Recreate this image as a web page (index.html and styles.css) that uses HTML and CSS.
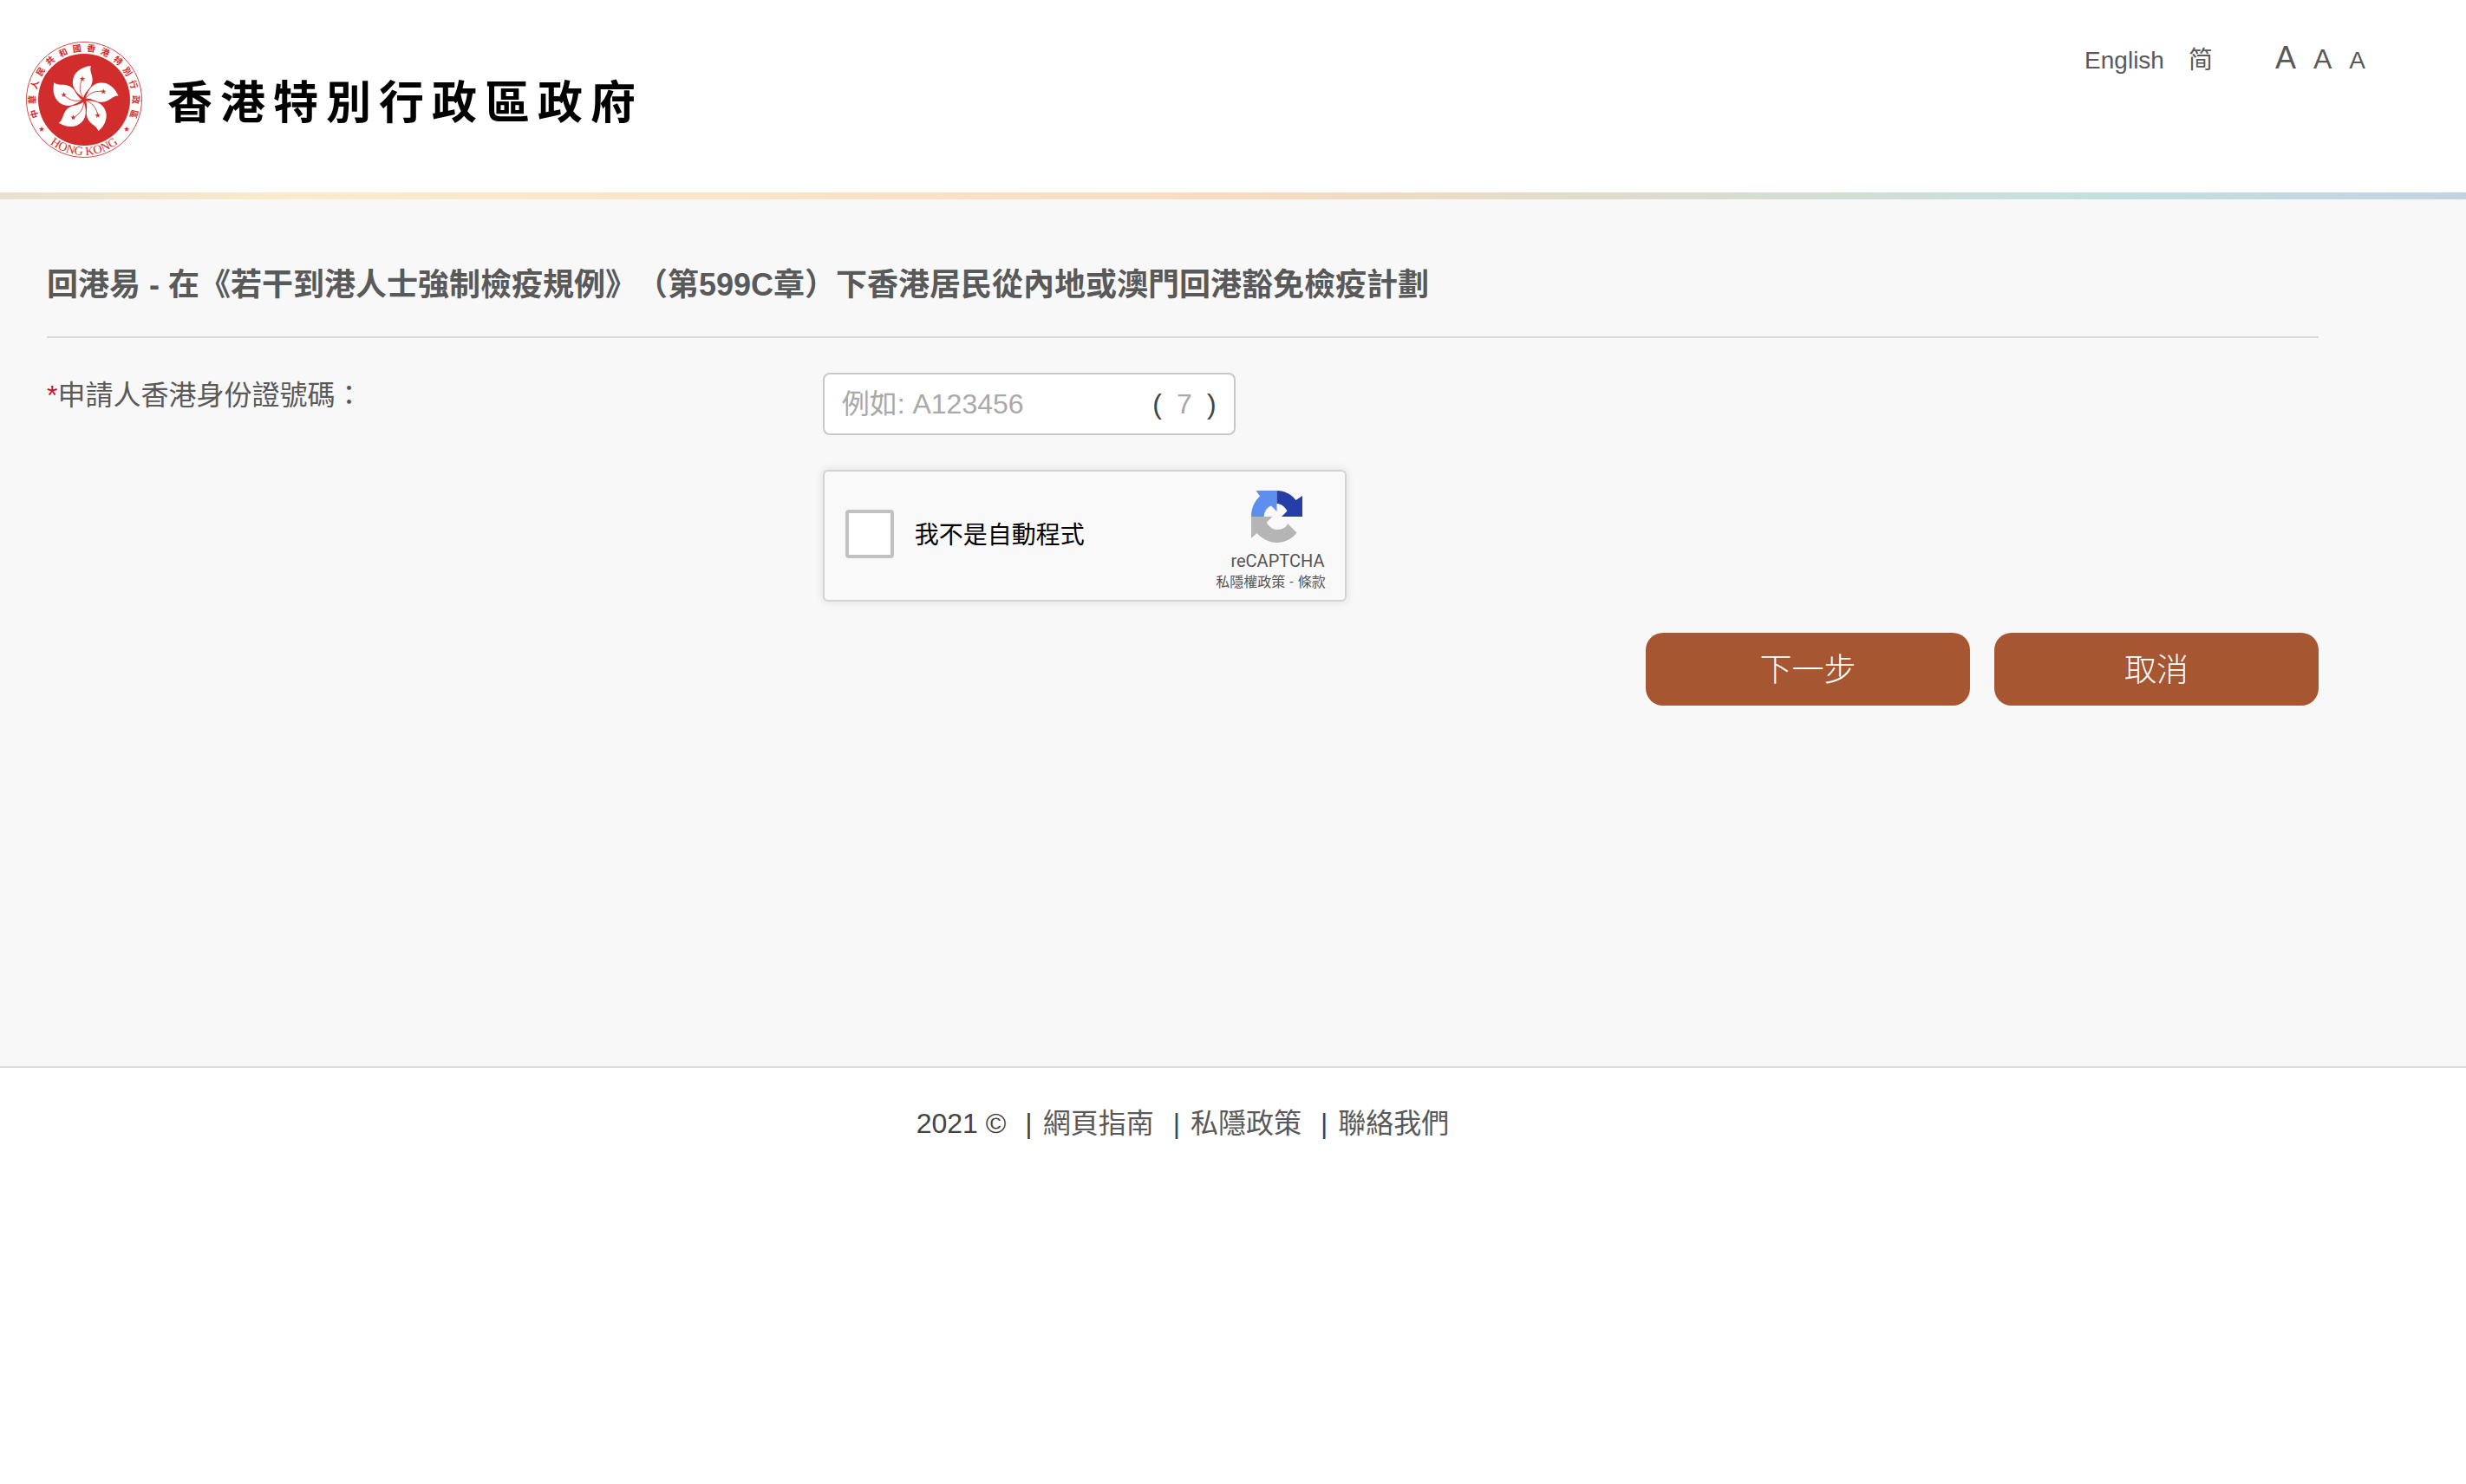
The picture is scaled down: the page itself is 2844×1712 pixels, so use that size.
FILE: index.html
```html
<!DOCTYPE html>
<html lang="zh-HK">
<head>
<meta charset="utf-8">
<meta name="viewport" content="width=device-width, initial-scale=1">
<title>回港易</title>
<link rel="stylesheet" href="styles.css">
</head>
<body>
<header class="site-header">
  <a class="brand" href="#">
    <svg class="emblem" viewBox="-68 -68 136 136" aria-hidden="true">
      <defs>
        <path id="star" d="M0,-3.4 L0.8,-1.1 L3.2,-1.1 L1.3,0.4 L2,2.8 L0,1.4 L-2,2.8 L-1.3,0.4 L-3.2,-1.1 L-0.8,-1.1Z"/>
        <g id="petal">
          <path fill="#fff" d="M-1,-2 C-9,-8 -14,-14 -13,-22 C-12,-32 -3,-38 8,-39 C5,-32 13,-26 8,-16 C6,-12 1,-9 -1,-2Z"/>
          <path fill="none" stroke="#d22d2d" stroke-width="0.8" d="M-1,-2 C-5,-8 -6,-14 -3,-22"/>
          <use href="#star" x="-2" y="-24" fill="#d22d2d"/>
        </g>
        <path id="lower-arc" d="M-64,0 A64,64 0 0 0 64,0"/>
      </defs>
      <circle r="66.5" fill="#fff" stroke="#d9474a" stroke-width="1"/>
      <circle r="53" fill="#d22d2d"/>
      <use href="#petal"/>
      <use href="#petal" transform="rotate(72)"/>
      <use href="#petal" transform="rotate(144)"/>
      <use href="#petal" transform="rotate(216)"/>
      <use href="#petal" transform="rotate(288)"/>
      <g class="ring-text">
        <text y="-56" transform="rotate(-106)">中</text>
        <text y="-56" transform="rotate(-90)">華</text>
        <text y="-56" transform="rotate(-73)">人</text>
        <text y="-56" transform="rotate(-57)">民</text>
        <text y="-56" transform="rotate(-41)">共</text>
        <text y="-56" transform="rotate(-24)">和</text>
        <text y="-56" transform="rotate(-8)">國</text>
        <text y="-56" transform="rotate(8)">香</text>
        <text y="-56" transform="rotate(24)">港</text>
        <text y="-56" transform="rotate(41)">特</text>
        <text y="-56" transform="rotate(57)">別</text>
        <text y="-56" transform="rotate(73)">行</text>
        <text y="-56" transform="rotate(90)">政</text>
        <text y="-56" transform="rotate(106)">區</text>
      </g>
      <use href="#star" x="-49" y="34" fill="#d22d2d"/>
      <use href="#star" x="49" y="34" fill="#d22d2d"/>
      <text class="ring-latin"><textPath href="#lower-arc" startOffset="50%">HONG KONG</textPath></text>
    </svg>
    <span class="brand-name">香港特別行政區政府</span>
  </a>
  <nav class="tools">
    <a href="#">English</a>
    <a href="#">简</a>
    <span class="sizes">
      <a class="size-l" href="#">A</a>
      <a class="size-m" href="#">A</a>
      <a class="size-s" href="#">A</a>
    </span>
  </nav>
</header>

<main class="content">
  <h1>回港易 - 在《若干到港人士強制檢疫規例》（第599C章）下香港居民從內地或澳門回港豁免檢疫計劃</h1>
  <form>
    <div class="row">
      <label class="field-label" for="hkid"><span class="required">*</span>申請人香港身份證號碼：</label>
      <div class="fields">
        <div class="id-box">
          <input class="id-main" id="hkid" type="text" placeholder="例如: A123456">
          <span>(</span>
          <input class="id-check" type="text" placeholder="7" aria-label="括號內數字">
          <span>)</span>
        </div>
        <div class="captcha">
          <input class="captcha-box" id="robot" type="checkbox">
          <label class="captcha-label" for="robot">我不是自動程式</label>
          <div class="captcha-brand">
            <svg class="captcha-logo" viewBox="0 0 60 60" aria-hidden="true">
              <path fill="#5f8fee" d="M5.7,0 H29.5 V24 L23,17.5 C17,20 15,25 14.7,30 H0 C0,20 4,12 10,6.5Z"/>
              <path fill="#263fa8" d="M29.5,0 C39,0 46,4 51.5,11 L59,6 V30 H35 L41.5,23.5 C38,17 33,15 29.5,15Z"/>
              <path fill="#b5b5b5" d="M0,30 H24.5 L17.7,36.7 C21,42 25,45 30,45 C36,45 41,42 42,38 L52.5,48.5 C47,56 38,60 30,60 C20,60 12,55 6.5,49 L0,55Z"/>
            </svg>
            <span class="captcha-name">reCAPTCHA</span>
            <span class="captcha-terms"><a href="#">私隱權政策</a><span>-</span><a href="#">條款</a></span>
          </div>
        </div>
      </div>
    </div>
    <div class="actions">
      <button type="submit">下一步</button>
      <button type="button">取消</button>
    </div>
  </form>
</main>

<footer class="site-footer">
  <span>2021 ©</span>
  <span class="item">|<a href="#">網頁指南</a></span>
  <span class="item">|<a href="#">私隱政策</a></span>
  <span class="item">|<a href="#">聯絡我們</a></span>
</footer>
</body>
</html>
```
FILE: styles.css
```css
* {
  box-sizing: border-box;
}

body {
  margin: 0;
  background: #fff;
  color: #444;
  font-family: "Liberation Sans", "Noto Sans CJK TC", sans-serif;
  font-size: 32px;
  line-height: 48px;
  text-spacing-trim: space-all;
}

a {
  color: #595959;
  text-decoration: none;
}

input,
button {
  font: inherit;
}

/* Header */
.site-header {
  display: flex;
  justify-content: space-between;
  align-items: flex-start;
  padding: 47px 116px 39px 29px;
  border-bottom: 8px solid;
  border-image: linear-gradient(90deg, #e8dfd0 0, #fbeccb 12%, #f8dcc0 50%, #dfdccb 65%, #c3e0df 85%, #c3d2e2 100%) 1;
}

.brand {
  display: flex;
  align-items: center;
  gap: 28px;
}

.emblem {
  display: block;
  width: 136px;
  height: 136px;
}

.ring-text {
  fill: #d22d2d;
  font-family: "Noto Sans CJK TC", sans-serif;
  font-size: 10px;
  font-weight: 700;
  text-anchor: middle;
}

.ring-latin {
  fill: #d22d2d;
  font-family: "Liberation Serif", serif;
  font-size: 14px;
  text-anchor: middle;
}

.brand-name {
  color: #000;
  font-family: "Noto Sans CJK TC", sans-serif;
  font-size: 52px;
  font-weight: 700;
  letter-spacing: 9px;
}

.tools {
  display: flex;
  align-items: baseline;
  gap: 28px;
  font-size: 28px;
  line-height: 40px;
}

.sizes {
  display: flex;
  align-items: baseline;
  gap: 20px;
  margin-left: 44px;
}

.size-l {
  font-size: 36px;
}

.size-m {
  font-size: 32px;
}

/* Form */
.content {
  min-height: 1000px;
  padding: 72px 170px 70px 54px;
  background: #f8f8f8;
}

h1 {
  margin: 0;
  padding-bottom: 32px;
  border-bottom: 2px solid #d9d9d9;
  color: #595959;
  font-size: 36px;
  line-height: 54px;
}

.row {
  display: grid;
  grid-template-columns: 1fr 2fr;
  column-gap: 32px;
  padding-top: 40px;
}

.field-label {
  padding-top: 2px;
  color: #595959;
}

.required {
  color: #c8102e;
}

.fields {
  display: grid;
  justify-items: start;
  gap: 40px;
}

.id-box {
  display: flex;
  align-items: center;
  width: 476px;
  height: 72px;
  padding: 0 20px;
  border: 2px solid #c8c8c8;
  border-radius: 8px;
  background: #fff;
}

.id-box input {
  min-width: 0;
  padding: 0;
  border: 0;
  background: none;
  color: #444;
}

.id-box input::placeholder {
  color: #a9a9a9;
  opacity: 1;
}

.id-main {
  flex: 1;
}

.id-box .id-check {
  width: 52px;
  text-align: center;
}

.captcha {
  display: flex;
  align-items: center;
  width: 604px;
  height: 152px;
  padding: 0 22px 0 24px;
  border: 2px solid #d3d3d3;
  border-radius: 6px;
  background: #f9f9f9;
  box-shadow: 0 0 8px 2px rgba(0, 0, 0, 0.08);
}

.captcha-box {
  width: 56px;
  height: 56px;
  margin: 0 24px 4px 0;
  border: 4px solid #c1c1c1;
  border-radius: 4px;
  background: #fff;
  appearance: none;
}

.captcha-label {
  flex: 1;
  color: #000;
  font-size: 28px;
}

.captcha-brand {
  display: flex;
  flex-direction: column;
  align-items: center;
  padding-top: 14px;
  color: #555;
  font-family: Roboto, "Noto Sans CJK TC", sans-serif;
}

.captcha-brand a {
  color: #555;
}

.captcha-logo {
  width: 60px;
  height: 60px;
  margin: 0 0 8px 16px;
}

.captcha-name {
  margin-left: 16px;
  font-size: 20px;
  line-height: 26px;
}

.captcha-terms {
  display: flex;
  gap: 5px;
  font-size: 16px;
  line-height: 24px;
}

.actions {
  display: flex;
  justify-content: flex-end;
  gap: 28px;
  margin-top: 36px;
}

.actions button {
  width: 374px;
  height: 84px;
  padding: 4px 0 0;
  border: 0;
  border-radius: 20px;
  background: #a65631;
  color: #fff;
  font-size: 37px;
  font-weight: 300;
}

/* Footer */
.site-footer {
  display: flex;
  justify-content: center;
  gap: 22px;
  padding: 40px 170px 36px 54px;
  border-top: 2px solid #ddd;
}

.item {
  display: flex;
  gap: 12px;
}
```
